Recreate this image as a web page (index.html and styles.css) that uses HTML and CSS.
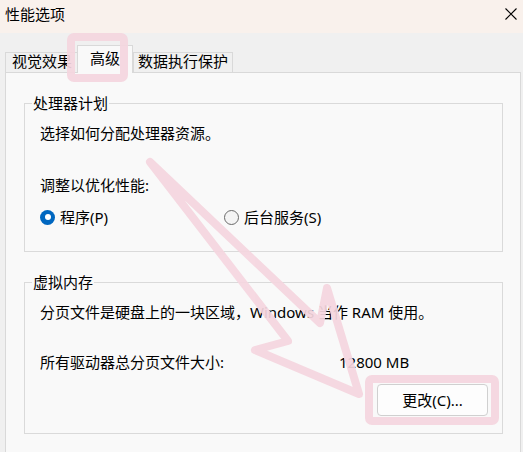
FILE: index.html
```html
<!DOCTYPE html>
<html lang="zh-CN">
<head>
<meta charset="utf-8">
<title>性能选项</title>
<link rel="stylesheet" href="styles.css">
</head>
<body>
<div class="window">
  <div class="titlebar">
    <span class="title">性能选项</span>
    <svg class="close" width="12" height="12" viewBox="0 0 12 12"><path d="M0.5 0.5 L11.5 11.5 M11.5 0.5 L0.5 11.5" stroke="#000" stroke-width="1.1" fill="none"/></svg>
  </div>
  <div class="tabs">
    <div class="tab tab-first">视觉效果</div>
    <div class="tab tab-active">高级</div>
    <div class="tab tab-last">数据执行保护</div>
  </div>
  <div class="panel">
    <fieldset class="group group-cpu">
      <legend class="legend">处理器计划</legend>
      <p class="line">选择如何分配处理器资源。</p>
      <p class="line line-gap">调整以优化性能:</p>
      <div class="radios">
        <label class="radio radio-first"><span class="dot dot-on"></span>程序(P)</label>
        <label class="radio"><span class="dot"></span>后台服务(S)</label>
      </div>
    </fieldset>
    <fieldset class="group group-mem">
      <legend class="legend">虚拟内存</legend>
      <p class="line">分页文件是硬盘上的一块区域，Windows 当作 RAM 使用。</p>
      <div class="line line-gap size-row">
        <span class="size-label">所有驱动器总分页文件大小:</span>
        <span class="size-value">12800 MB</span>
      </div>
      <div class="btn-row">
        <button class="btn">更改(C)...</button>
      </div>
    </fieldset>
  </div>
  <svg class="overlay" width="523" height="452" viewBox="0 0 523 452">
    <g fill="none" stroke="#f5d6df" stroke-width="8" stroke-linejoin="round" stroke-linecap="round" opacity="0.92">
      <rect x="71" y="37" width="53" height="41" rx="3"/>
      <rect x="369" y="379" width="126" height="42" rx="3"/>
      <polygon points="150,162 320,323 327,288 359,394 255,350 288,341"/>
    </g>
  </svg>
</div>
</body>
</html>
```

FILE: styles.css
```css
* { box-sizing: border-box; }

body {
  margin: 0;
  background: #f0f0f0;
  font-family: "Noto Sans", "Noto Sans CJK SC", sans-serif;
  font-size: 15px;
  color: #000;
}

.window {
  position: relative;
  width: 523px;
  height: 452px;
  overflow: hidden;
  background: #f0f0f0;
}

.titlebar {
  height: 33px;
  background: #f9f1ec;
  display: flex;
  align-items: center;
  justify-content: space-between;
  padding: 0 6px 5px 5px;
  line-height: 20px;
}

.close { display: block; }

.tabs {
  display: flex;
  align-items: flex-end;
  padding: 12px 0 0 5px;
  position: relative;
  z-index: 1;
}

.tab {
  height: 20px;
  border: 1px solid #d9d9d9;
  border-bottom: none;
  background: #f0f0f0;
  line-height: 16px;
  padding: 0 6px;
  white-space: nowrap;
}

.tab-first { padding: 0 6px; }

.tab-active {
  height: 28px;
  margin: 0 0 -1px -2px;
  padding: 0 12px;
  line-height: 24px;
  background: #f9f9f9;
  position: relative;
}

.tab-last { padding: 0 4px; }

.panel {
  margin: 0 2px 0 5px;
  height: 400px;
  border: 1px solid #d9d9d9;
  background: #f9f9f9;
  padding: 20px 17px 0 18px;
}

.group {
  margin: 0;
  min-width: 0;
  border: 1px solid #dadada;
  padding: 10px 14px 24px 15px;
}

.group-mem {
  margin-top: 20px;
  padding-bottom: 17px;
}

.legend {
  margin-left: -8px;
  padding: 0 1px;
  line-height: 20px;
}

.line {
  margin: 0;
  line-height: 20px;
  white-space: nowrap;
}

.line-gap { margin-top: 32px; }

.group-mem .line-gap { margin-top: 30px; }

.radios {
  display: flex;
  margin-top: 12px;
  line-height: 20px;
}

.radio {
  display: flex;
  align-items: center;
  gap: 5px;
}

.radio-first { width: 184px; }

.dot {
  width: 15px;
  height: 15px;
  border-radius: 50%;
  border: 1px solid #6a6a6a;
  background: #f4f4f4;
  position: relative;
}

.dot-on {
  border: none;
  background: #0067c0;
}

.dot-on::after {
  content: "";
  position: absolute;
  left: 4.5px;
  top: 4.5px;
  width: 6px;
  height: 6px;
  border-radius: 50%;
  background: #fff;
}

.size-row { display: flex; }

.size-label { width: 299px; }

.btn-row {
  display: flex;
  justify-content: flex-end;
  margin-top: 12px;
}

.btn {
  width: 111px;
  height: 32px;
  border: 1px solid #d0d0d0;
  border-radius: 4px;
  background: #fdfdfd;
  font-family: inherit;
  font-size: 15px;
  color: #000;
  padding: 0;
  line-height: 20px;
}

.overlay {
  position: absolute;
  left: 0;
  top: 0;
  pointer-events: none;
  z-index: 5;
}
```
